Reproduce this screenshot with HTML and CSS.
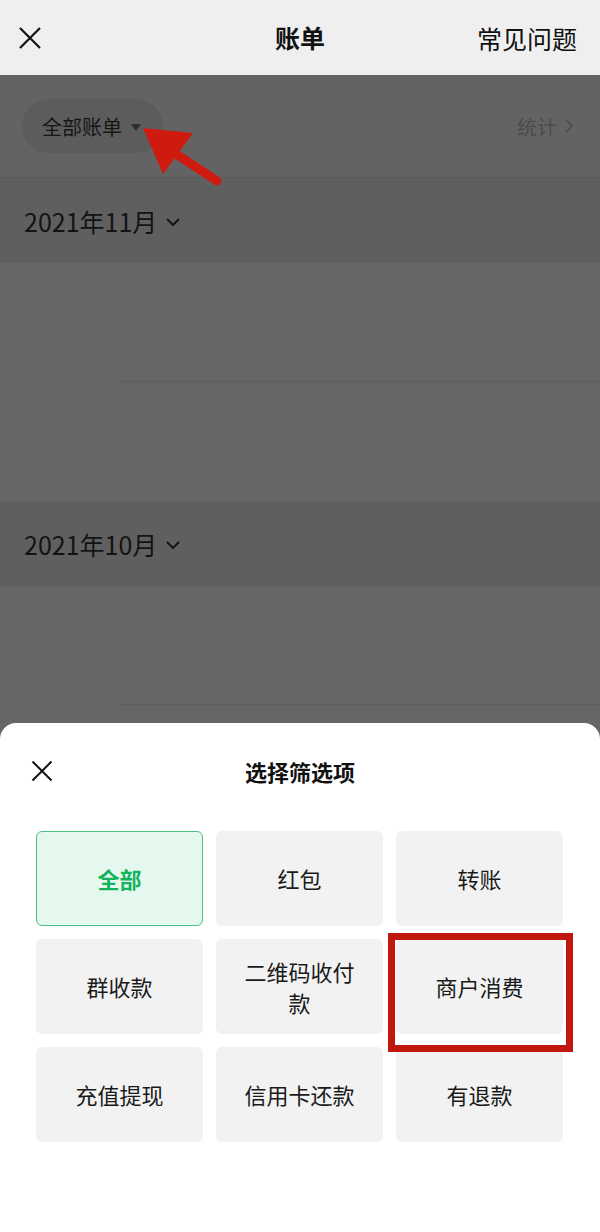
FILE: index.html
```html
<!DOCTYPE html>
<html lang="zh-CN">
<head>
<meta charset="utf-8">
<title>账单</title>
<link rel="stylesheet" href="styles.css">
</head>
<body>
<div class="page">
  <header class="topbar">
    <svg class="icon-close" width="24" height="24" viewBox="0 0 24 24"><path d="M2 2L22 22M22 2L2 22" stroke="#111" stroke-width="2.2" fill="none"/></svg>
    <div class="topbar-title">账单</div>
    <div class="topbar-link">常见问题</div>
  </header>

  <main class="bill">
    <div class="filter-row">
      <div class="chip">全部账单<span class="tri"></span></div>
      <div class="stat">统计<svg width="10" height="16" viewBox="0 0 10 16"><path d="M2 1.5L8 8L2 14.5" stroke="#4c4c4c" stroke-width="1.6" fill="none"/></svg></div>
    </div>

    <section class="month">
      <div class="month-head">2021年11月<svg width="16" height="10" viewBox="0 0 16 10"><path d="M2 2L8 8L14 2" stroke="#111" stroke-width="1.8" fill="none"/></svg></div>
      <div class="list">
        <div class="item"></div>
        <div class="item"></div>
      </div>
    </section>

    <section class="month">
      <div class="month-head">2021年10月<svg width="16" height="10" viewBox="0 0 16 10"><path d="M2 2L8 8L14 2" stroke="#111" stroke-width="1.8" fill="none"/></svg></div>
      <div class="list">
        <div class="item"></div>
        <div class="item"></div>
      </div>
    </section>
  </main>

  <svg class="annot-arrow" width="600" height="200" viewBox="0 0 600 200">
    <line x1="170" y1="150" x2="217" y2="181" stroke="#cf1a10" stroke-width="9" stroke-linecap="round"/>
    <polygon points="143,128 193,133 163,174" fill="#cf1a10"/>
  </svg>

  <div class="sheet">
    <div class="sheet-head">
      <svg class="sheet-close" width="22" height="22" viewBox="0 0 22 22"><path d="M1.5 1.5L20.5 20.5M20.5 1.5L1.5 20.5" stroke="#111" stroke-width="2" fill="none"/></svg>
      <div class="sheet-title">选择筛选项</div>
    </div>
    <div class="grid">
      <div class="opt opt-active">全部</div>
      <div class="opt">红包</div>
      <div class="opt">转账</div>
      <div class="opt">群收款</div>
      <div class="opt">二维码收付款</div>
      <div class="opt opt-marked">商户消费<span class="mark"></span></div>
      <div class="opt">充值提现</div>
      <div class="opt">信用卡还款</div>
      <div class="opt">有退款</div>
    </div>
  </div>
</div>
</body>
</html>
```

FILE: styles.css
```css
* { box-sizing: border-box; }
html, body { margin: 0; padding: 0; }
body {
  width: 600px;
  height: 1232px;
  overflow: hidden;
  font-family: "Noto Sans CJK SC", "Noto Sans", sans-serif;
  color: #111;
  background: #666;
}
.page {
  position: relative;
  width: 600px;
  height: 1232px;
  overflow: hidden;
}

/* top bar */
.topbar {
  height: 75px;
  background: #efefef;
  display: flex;
  align-items: center;
  justify-content: space-between;
  padding: 0 23px 0 18px;
  position: relative;
}
.topbar-title {
  position: absolute;
  left: 0;
  right: 0;
  text-align: center;
  font-size: 25px;
  font-weight: 700;
  line-height: 75px;
  pointer-events: none;
}
.topbar-link {
  font-size: 25px;
  font-weight: 400;
  color: #111;
}

/* dimmed bill area */
.bill {
  background: #636363;
}
.filter-row {
  height: 103px;
  display: flex;
  align-items: center;
  justify-content: space-between;
  padding: 0 26px 0 22px;
  border-bottom: 1px solid #5a5a5a;
}
.chip {
  height: 54px;
  padding: 0 22px 0 20px;
  border-radius: 27px;
  background: #5c5c5c;
  display: flex;
  align-items: center;
  font-size: 20px;
  color: #161616;
}
.tri {
  width: 0;
  height: 0;
  margin-left: 9px;
  margin-top: 3px;
  border-left: 5px solid transparent;
  border-right: 5px solid transparent;
  border-top: 7px solid #2d2d2d;
}
.stat {
  display: flex;
  align-items: center;
  gap: 7px;
  font-size: 20px;
  color: #4c4c4c;
}

.month-head {
  height: 85px;
  background: #5f5f5f;
  display: flex;
  align-items: center;
  gap: 8px;
  padding-left: 24px;
  font-size: 25px;
  color: #131313;
}
.month-head svg { margin-top: 2px; }
.list {
  background: #666666;
}
.item {
  height: 119px;
  margin-left: 120px;
  border-bottom: 1px solid #5e5e5e;
}
.item:last-child { border-bottom: none; }

/* annotation arrow */
.annot-arrow {
  position: absolute;
  left: 0;
  top: 0;
}

/* bottom sheet */
.sheet {
  position: absolute;
  left: 0;
  right: 0;
  bottom: 0;
  height: 509px;
  background: #fff;
  border-radius: 16px 16px 0 0;
}
.sheet-head {
  height: 108px;
  position: relative;
  display: flex;
  align-items: center;
  justify-content: center;
}
.sheet-close {
  position: absolute;
  left: 31px;
  top: 37px;
}
.sheet-title {
  font-size: 22px;
  font-weight: 700;
  margin-top: -12px;
}
.grid {
  display: grid;
  grid-template-columns: repeat(3, 167px);
  grid-auto-rows: 95px;
  gap: 13px;
  padding: 0 37px 0 36px;
}
.opt {
  position: relative;
  background: #f2f2f2;
  border-radius: 6px;
  display: flex;
  align-items: center;
  justify-content: center;
  text-align: center;
  padding: 0 20px;
  font-size: 22px;
  line-height: 31px;
  color: #1a1a1a;
}
.opt-active {
  background: #e5f8ee;
  border: 1.5px solid #4cbf84;
  color: #13b25c;
  font-weight: 700;
}
.opt-marked { z-index: 2; }
.mark {
  position: absolute;
  top: -6px;
  left: -8px;
  right: -10px;
  bottom: -18px;
  border: 7.5px solid #c1170e;
  pointer-events: none;
}
```
